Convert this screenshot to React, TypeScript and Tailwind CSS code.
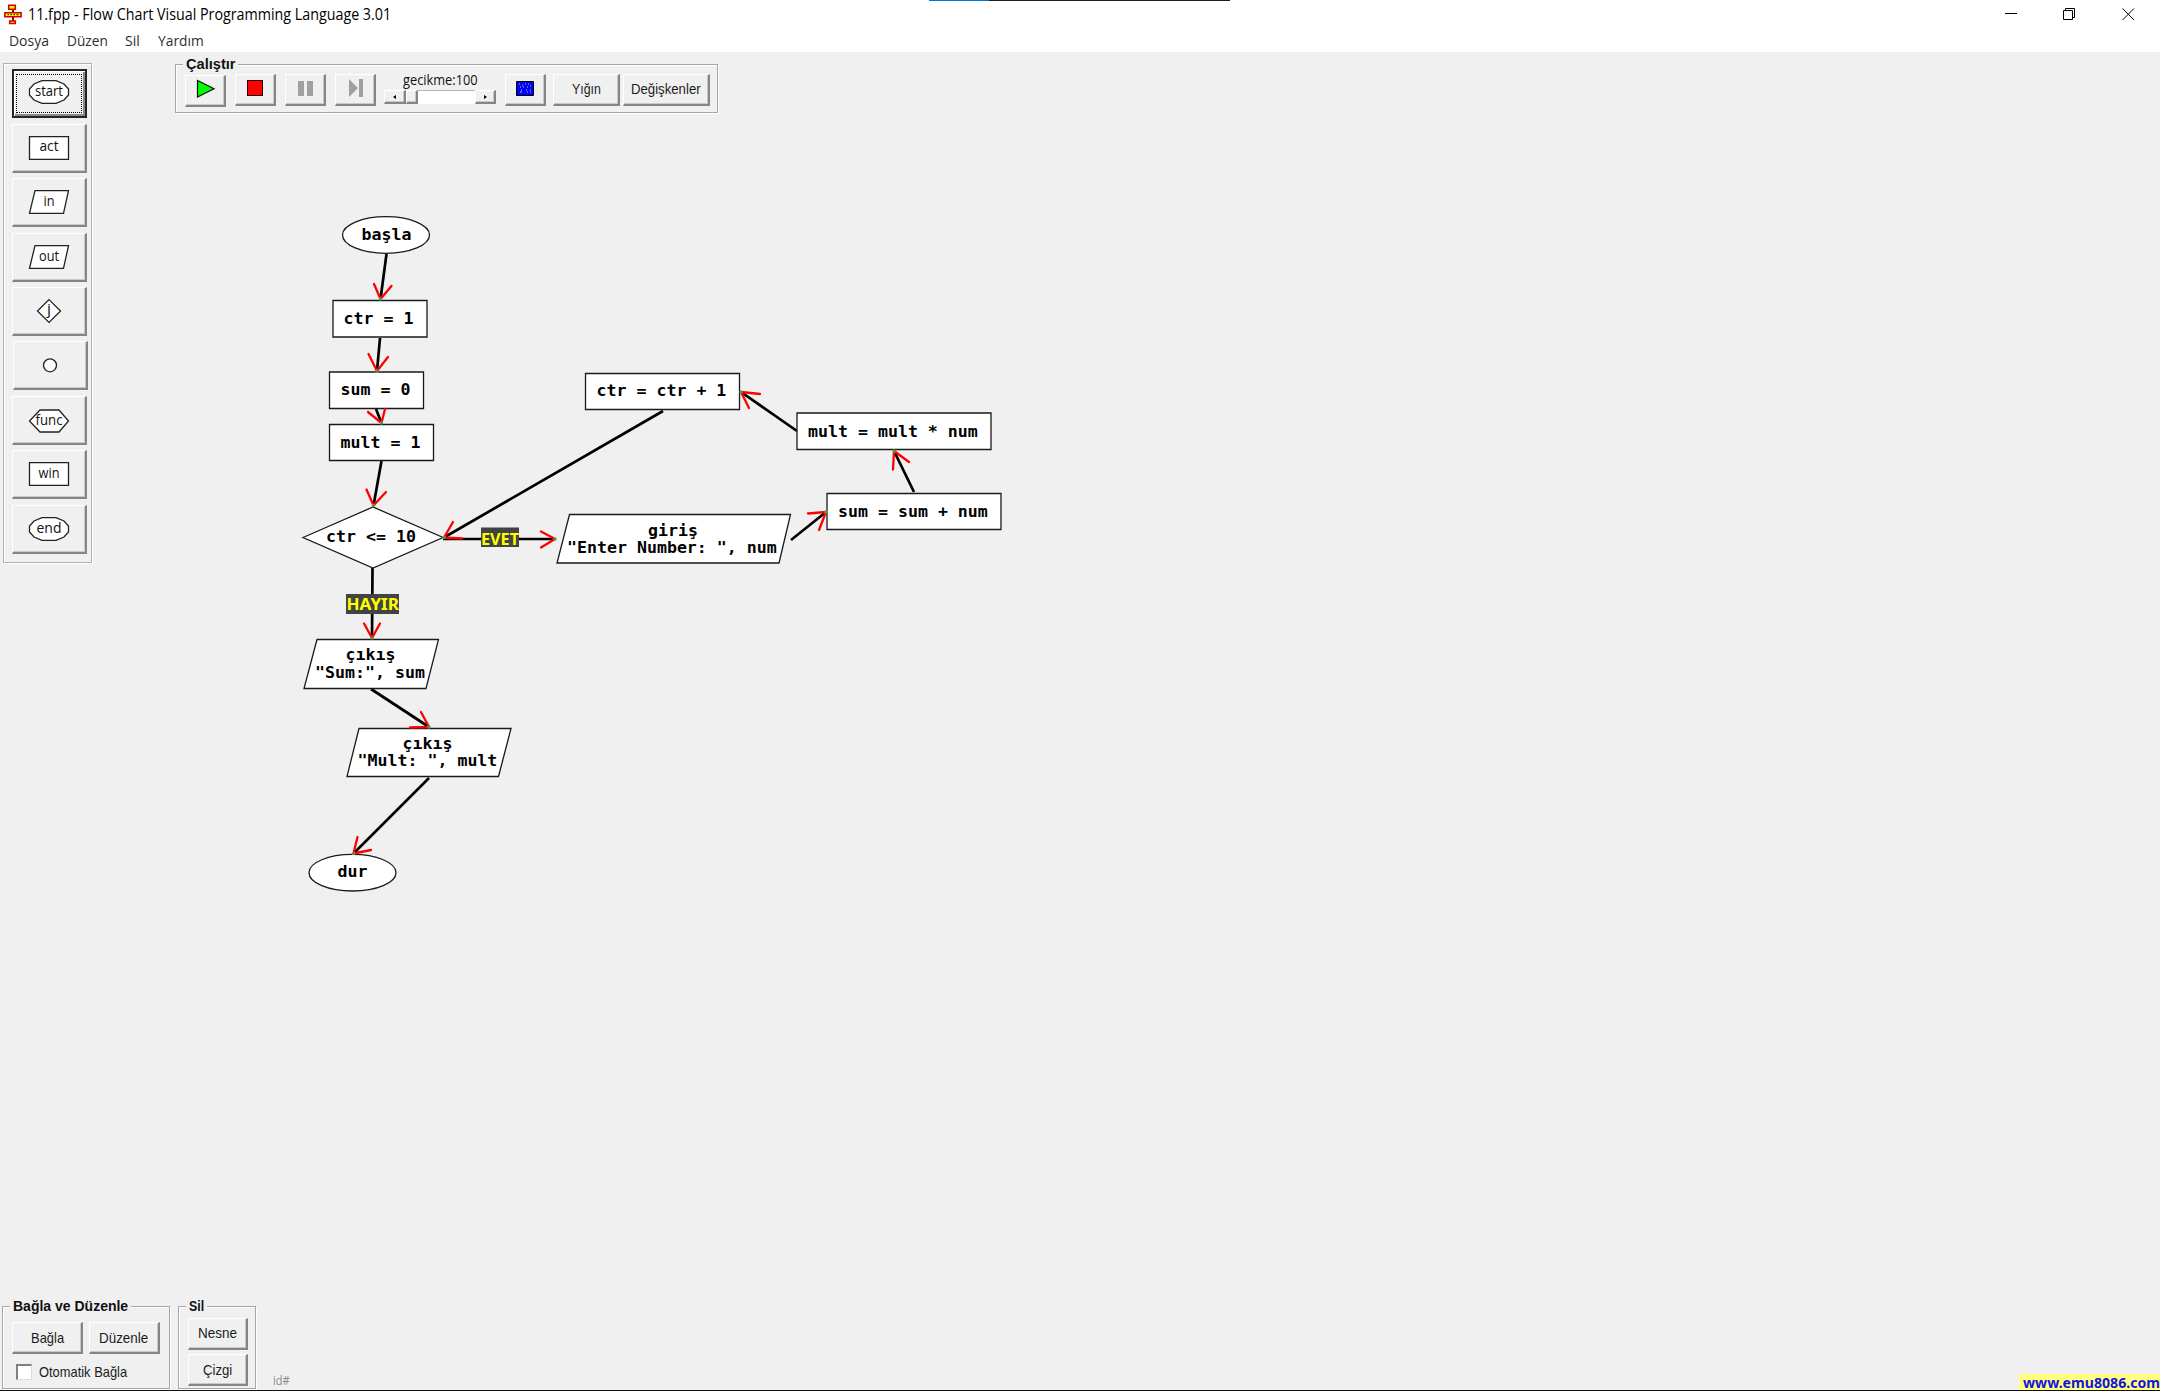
import { useLayoutEffect, useRef, type ReactNode } from "react";

/* Text stretched horizontally so that it fills exactly `w` pixels. */
function Fit({ w, className = "", children }: { w: number; className?: string; children: string }) {
  const ref = useRef<HTMLSpanElement>(null);
  useLayoutEffect(() => {
    const el = ref.current;
    if (el) el.style.transform = `scaleX(${w / el.offsetWidth})`;
  }, [w]);
  return (
    <span className={"flex shrink-0 " + className} style={{ width: w }}>
      <span ref={ref} className="inline-block origin-left whitespace-nowrap">{children}</span>
    </span>
  );
}

const bevel =
  "flex shrink-0 items-center justify-center bg-[#f0f0f0] border-t-[1.5px] border-l-[1.5px] border-r-2 border-b-2 border-t-white border-l-white border-r-[#858585] border-b-[#858585] shadow-[inset_-1px_-1px_0_#c9c9c9]";

function Btn({ className = "", children }: { className?: string; children?: ReactNode }) {
  return <button className={bevel + " " + className}>{children}</button>;
}

function Group({ title, tw, className = "", children }: { title: string; tw: number; className?: string; children: ReactNode }) {
  return (
    <section className={"relative shrink-0 border border-[#a6a6a6] shadow-[1px_1px_0_#fff,inset_1px_1px_0_#fff] " + className}>
      <h2 className="absolute left-[7px] -top-[11px] bg-[#f0f0f0] px-[3px] font-['Liberation_Sans'] text-[14px] leading-[20px] font-bold text-[#111]">
        <Fit w={tw}>{title}</Fit>
      </h2>
      {children}
    </section>
  );
}

const glyph = "fill-white stroke-[#222] [stroke-width:1.3]";
const glyphs: { h: string; dy: string; label: string; len: number; y: number; shape: ReactNode }[] = [
  { h: "h-[55px]", dy: "-mt-[3px] -ml-px", label: "start", len: 28, y: 16, shape: <path className={glyph} d="M13 .6H27L35 4L39.5 9V15L35 20L27 23.4H13L5 20L.5 15V9L5 4Z" /> },
  { h: "h-[54px]", dy: "-mt-px", label: "act", len: 19, y: 15, shape: <path className={glyph} d="M.5 .6H39.5V23.4H.5Z" /> },
  { h: "h-[55px]", dy: "-mt-px", label: "in", len: 11, y: 16, shape: <path className={glyph} d="M6 .6H39.5L34.5 23.4H.5Z" /> },
  { h: "h-[54px]", dy: "-mt-px", label: "out", len: 20, y: 16, shape: <path className={glyph} d="M6 .6H39.5L34.5 23.4H.5Z" /> },
  { h: "h-[54px]", dy: "-mt-px", label: "j", len: 4, y: 15, shape: <path className={glyph} d="M20 .6L31.5 12L20 23.4L8.5 12Z" /> },
  { h: "h-[55px]", dy: "-mt-px", label: "", len: 0, y: 16, shape: <circle className={glyph} cx="20" cy="12.3" r="6.5" /> },
  { h: "h-[54px]", dy: "mt-[2px]", label: "func", len: 27, y: 16, shape: <path className={glyph} d="M11 1H30L39.5 12L30 23H11L.5 12Z" /> },
  { h: "h-[55px]", dy: "-mt-px", label: "win", len: 21, y: 16, shape: <path className={glyph} d="M.5 .6H39.5V23.4H.5Z" /> },
  { h: "h-[49px]", dy: "-mt-px", label: "end", len: 25, y: 16, shape: <path className={glyph} d="M13 .6H27L35 4L39.5 9V15L35 20L27 23.4H13L5 20L.5 15V9L5 4Z" /> },
];

function Palette() {
  return (
    <nav className="mt-[11px] ml-[3px] flex h-[500px] w-[89px] shrink-0 flex-col border border-[#b0b0b0] pt-[5px] pl-[7.500px] shadow-[1px_1px_0_#fff,inset_1px_1px_0_#fff]">
      {glyphs.map((g, i) => (
        <div key={i} className={"shrink-0 " + g.h + (i === 5 ? " pl-px" : "")}>
          <button
            className={
              i === 0
                ? "flex h-[49px] w-[75px] items-center justify-center border-2 border-[#2b2224] shadow-[inset_1px_1px_0_#fff,inset_-2px_-2px_0_#8a8a8a]"
                : bevel + " h-[49px] w-[75px]"
            }
          >
            <span className={i === 0 ? "flex h-[39px] w-[66px] items-center justify-center border border-dotted border-black" : "flex"}>
              <svg width="40" height="24" viewBox="0 0 40 24" className={g.dy + " overflow-visible"}>
                {g.shape}
                {g.label && (
                  <text x={20} y={g.y} textAnchor="middle" textLength={g.len} lengthAdjust="spacingAndGlyphs" className="fill-[#111] font-['Open_Sans'] text-[14px]">
                    {g.label}
                  </text>
                )}
              </svg>
            </span>
          </button>
        </div>
      ))}
    </nav>
  );
}

function Slider() {
  return (
    <div className="flex h-[14px] w-[112px] bg-white">
      <Btn className="h-[14px] w-[22px]">
        <svg width="3" height="4"><path d="M3 0V4L0 2Z" /></svg>
      </Btn>
      <Btn className="h-[14px] w-[12px]" />
      <span className="flex-1 border-t border-[#b5b5b5]" />
      <Btn className="h-[14px] w-[21px]">
        <svg width="3" height="4"><path d="M0 0V4L3 2Z" /></svg>
      </Btn>
    </div>
  );
}

const label = "font-['Liberation_Sans'] text-[14.5px] leading-[18px] text-[#1c1c1c]";

function RunPanel() {
  return (
    <Group title="Çalıştır" tw={49} className="mt-[12px] ml-[83px] h-[49px] w-[543px]">
      <div className="flex pt-[9px] pl-[9px]">
        <Btn className="mt-px mr-[9px] h-[32px] w-[41px]">
          <svg width="20" height="20" className="-mt-1 ml-px"><path d="M1.5 1.5V18L18 9.7Z" fill="#0f0" stroke="#111" strokeWidth="1.2" /></svg>
        </Btn>
        <Btn className="mr-[9px] h-[32px] w-[41px]">
          <span className="-mt-[3px] size-[16px] border border-[#200] bg-[#f00]" />
        </Btn>
        <Btn className="mr-[9px] h-[32px] w-[41px]">
          <span className="-mt-[3px] flex gap-[3px]">
            <i className="h-[15px] w-[6px] bg-[#a0a0a0]" />
            <i className="h-[15px] w-[6px] bg-[#a0a0a0]" />
          </span>
        </Btn>
        <Btn className="mr-[8px] h-[32px] w-[41px]">
          <svg width="14" height="18" className="-mt-[3px] ml-px" fill="#a0a0a0"><path d="M0 0L9 9L0 18ZM10 0H14V18H10Z" /></svg>
        </Btn>
        <div className="mr-[9px] flex w-[112px] flex-col">
          <Fit w={75} className="ml-[19px] h-[16px] font-['Open_Sans'] text-[14px] leading-[12px] text-[#111]">gecikme:100</Fit>
          <Slider />
        </div>
        <Btn className="mr-[7px] h-[32px] w-[41px]">
          <svg width="18" height="15" className="-mt-[3px]">
            <path d="M.5 .5H17.5V14.5H.5Z" fill="#00f" stroke="#000" />
            <path d="M3 3h1M6 4h1M9 3h1M12 3h1M14 5h1M4 6h1M7 6h1M11 6h1M5 9h1M4 11h2M10 9h1M11 11h1M14 9h1M14 11h1" stroke="#c8c890" strokeWidth="1.2" />
          </svg>
        </Btn>
        <Btn className="mr-[3px] h-[32px] w-[67px]"><Fit w={29} className={label + " -mt-px"}>Yığın</Fit></Btn>
        <Btn className="h-[32px] w-[87px]"><Fit w={70} className={label + " -mt-px"}>Değişkenler</Fit></Btn>
      </div>
    </Group>
  );
}

type Pt = [number, number];
const arrows: Pt[][] = [
  [[386.5, 254], [380.5, 299], [374, 284], [391.5, 286]],
  [[380, 338], [377, 371], [368.5, 354], [388, 357]],
  [[376, 409], [381.5, 423], [368, 412], [385, 409]],
  [[381.5, 461], [373.5, 505.5], [366.5, 489.5], [386, 492]],
  [[663, 411], [444, 537.5], [453, 522], [462, 538.5]],
  [[443, 539], [555, 539], [541, 531.5], [541, 547.5]],
  [[372.5, 568], [372, 638], [364, 623.5], [380, 623.5]],
  [[371, 689], [429, 727], [421, 712], [410, 727.5]],
  [[429, 778], [353.5, 853.5], [357.5, 837], [371, 850]],
  [[791, 540], [826, 512], [808, 513.5], [819, 530]],
  [[914, 492], [894, 451], [893, 469.5], [909, 462]],
  [[797, 431], [741, 392], [760, 394], [749, 408]],
];

const shapes = [
  "M333 300.5H427V337H333Z",
  "M329.5 372H423.5V408.5H329.5Z",
  "M329.5 424.5H433.5V460.5H329.5Z",
  "M303 537.5L373 507L443 537.5L373 568Z",
  "M317 639.5H438.5L426 688.5H304Z",
  "M359 728.5H511L498.5 776.5H347Z",
  "M585.5 373.5H739.5V409.5H585.5Z",
  "M797 413H991V449.5H797Z",
  "M827 493.5H1001V529.5H827Z",
  "M569.5 514.5H790.5L779 563H557Z",
];

const texts: [number, number, string][] = [
  [361.5, 240, "başla"],
  [343.5, 324, "ctr = 1"],
  [340.5, 395, "sum = 0"],
  [340.5, 447.5, "mult = 1"],
  [326, 542, "ctr <= 10"],
  [345.5, 660, "çıkış"],
  [315, 677.5, "\"Sum:\", sum"],
  [402.5, 749, "çıkış"],
  [357.5, 766, "\"Mult: \", mult"],
  [337.5, 877, "dur"],
  [596.5, 396, "ctr = ctr + 1"],
  [808, 436.5, "mult = mult * num"],
  [838, 516.5, "sum = sum + num"],
  [648, 535.5, "giriş"],
  [567, 553, "\"Enter Number: \", num"],
];

function FlowChart() {
  return (
    <svg width="1020" height="920" viewBox="0 0 1020 920" className="pointer-events-none absolute top-0 left-0">
      {arrows.map(([a, b], i) => (
        <path key={i} d={`M${a}L${b}`} stroke="#000" strokeWidth="2.7" />
      ))}
      <g fill="#fff" stroke="#1a1a1a" strokeWidth="1.3">
        <ellipse cx="386" cy="235" rx="43.5" ry="18.3" />
        <ellipse cx="352.5" cy="872.7" rx="43.5" ry="18.3" />
        {shapes.map((d) => <path key={d} d={d} />)}
      </g>
      {arrows.map(([, b, c, e], i) => (
        <g key={i}>
          <path d={`M${c}L${b}L${e}`} stroke="#f00" strokeWidth="2.3" strokeLinejoin="bevel" strokeLinecap="round" fill="none" />
          <circle cx={b[0]} cy={b[1]} r="1.7" fill="#3c3" />
          <circle cx={b[0]} cy={b[1]} r="0.8" fill="#c0c" />
        </g>
      ))}
      <g className="font-['DejaVu_Sans_Mono'] text-[15px] font-bold" xmlSpace="preserve" transform="translate(0 .4)">
        {texts.map(([x, y, t]) => (
          <text key={x + "," + y} x={x} y={y} textLength={t.length * 9.99} lengthAdjust="spacingAndGlyphs">{t}</text>
        ))}
      </g>
      <path d="M481 527.5H519V547H481ZM346 594H399V614H346Z" fill="#434343" />
      <g className="fill-[#ff0] font-['Noto_Sans'] text-[16px] font-bold">
        <text x="481" y="544.5" textLength="38" lengthAdjust="spacingAndGlyphs">EVET</text>
        <text x="346.5" y="610" textLength="52.5" lengthAdjust="spacingAndGlyphs">HAYIR</text>
      </g>
    </svg>
  );
}

const menuText = "font-['Open_Sans'] text-[15px] leading-[22px] text-[#2e2e2e]";

export default function App() {
  return (
    <div className="relative flex h-[1391px] w-[2160px] flex-col overflow-hidden bg-[#f0f0f0]">
      <header className="relative flex h-[28px] shrink-0 items-center bg-white pl-[4px]">
        <div className="absolute top-0 left-[929px] flex h-px w-[301px] bg-[#1d1d1d]"><i className="w-[60px] bg-[#0078d7]" /></div>
        <svg width="18" height="21" viewBox="0 0 18 21" className="mr-[6px]">
          <path d="M8 5H10V17H8Z" fill="#a00000" />
          <path d="M4.700 1.200H11.300V5.300H4.700ZM.9 8.700H17.100V12.800H.9ZM5.700 17H11.300V19.500H5.700Z" fill="#ff0" stroke="#d00000" strokeWidth="1.600" />
          <path d="M3.500 10.700h1.500M6.500 10.700h1.500M9.500 10.700h1.500M12.500 10.700h2" stroke="#700" strokeWidth="1.300" />
        </svg>
        <Fit w={363} className="font-['Open_Sans'] text-[15.500px] leading-[24px] text-black">11.fpp - Flow Chart Visual Programming Language 3.01</Fit>
        <span className="flex-1" />
        <svg width="140" height="14" viewBox="0 0 140 14" fill="none" stroke="#000" className="mr-[15px]">
          <path d="M0 6.500H12M58.500 3.500H67.500V12.500H58.500ZM60.500 3V1.500H69.500V10.500H68M117.500 1.500L129 13M129 1.500L117.500 13" />
        </svg>
      </header>
      <div className="flex h-[24px] shrink-0 items-start bg-white pt-px pl-[9px]">
        <Fit w={40} className={"mr-[18px] " + menuText}>Dosya</Fit>
        <Fit w={41} className={"mr-[17px] " + menuText}>Düzen</Fit>
        <Fit w={15} className={"mr-[18px] " + menuText}>Sil</Fit>
        <Fit w={46} className={menuText}>Yardım</Fit>
      </div>
      <div className="flex items-start">
        <Palette />
        <RunPanel />
      </div>
      <span className="flex-1" />
      <footer className="flex h-[85px] shrink-0 items-start border-b border-[#111] pl-[2px]">
        <Group title="Bağla ve Düzenle" tw={115} className="h-[83px] w-[168px]">
          <div className="flex gap-[6px] pt-[15px] pl-[9px]">
            <Btn className="h-[32px] w-[71px]"><Fit w={33} className={label}>Bağla</Fit></Btn>
            <Btn className="h-[32px] w-[71px]"><Fit w={49} className={label + " -ml-[2px]"}>Düzenle</Fit></Btn>
          </div>
          <label className="mt-[9px] ml-[13px] flex items-center">
            <span className="mr-[7px] size-[16px] border-t-2 border-l-2 border-r border-b border-t-[#808080] border-l-[#808080] border-r-[#ddd] border-b-[#ddd] bg-white" />
            <Fit w={88} className={label}>Otomatik Bağla</Fit>
          </label>
        </Group>
        <Group title="Sil" tw={15} className="ml-[8px] h-[83px] w-[78px]">
          <div className="flex flex-col gap-[4px] pt-[11px] pl-[9px]">
            <Btn className="h-[32px] w-[60px]"><Fit w={39} className={label + " -mt-px"}>Nesne</Fit></Btn>
            <Btn className="h-[32px] w-[60px]"><Fit w={29} className={label}>Çizgi</Fit></Btn>
          </div>
        </Group>
        <Fit w={17} className="mt-[65px] ml-[17px] font-['Open_Sans'] text-[13px] leading-[18px] text-[#8a8a8a]">id#</Fit>
        <span className="flex-1" />
        <a className="flex h-[16px] w-[141px] self-end bg-[#ffff80] pl-[4px] font-['Noto_Sans'] text-[14px] leading-[17px] font-bold text-[#1414e0]">
          <Fit w={137}>www.emu8086.com</Fit>
        </a>
      </footer>
      <FlowChart />
    </div>
  );
}
